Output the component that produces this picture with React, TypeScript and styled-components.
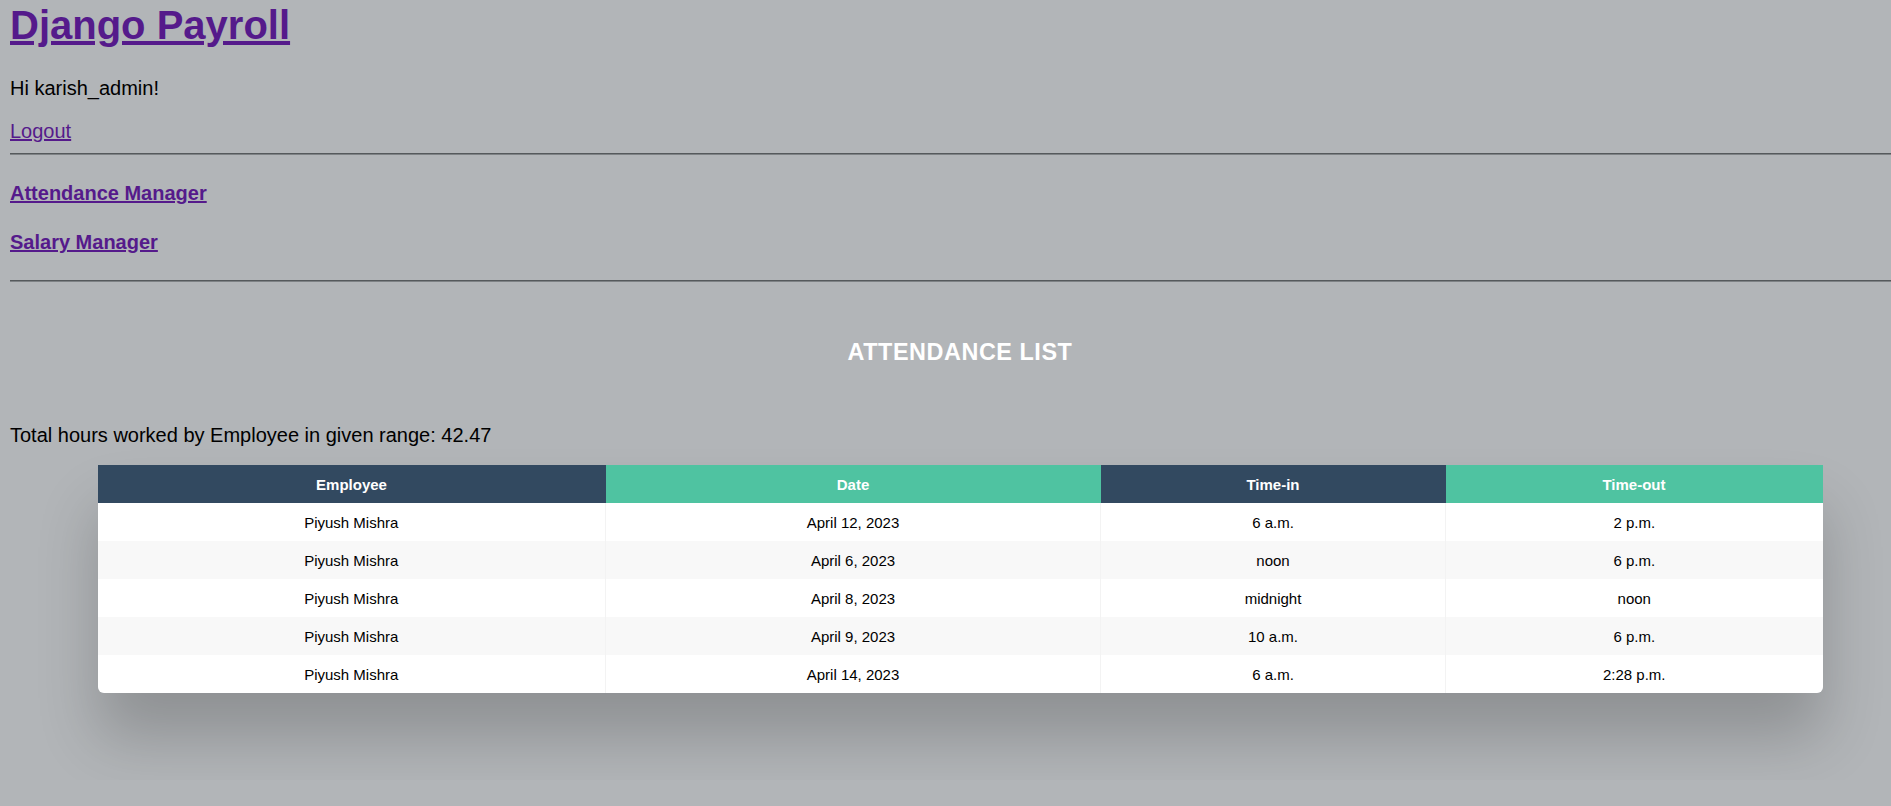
import styled, { createGlobalStyle } from "styled-components";

const GlobalStyle = createGlobalStyle`
  html, body {
    margin: 0;
    padding: 0;
    background: #b2b5b8;
    overflow: hidden;
  }
  body {
    font-family: "Liberation Sans", Arial, sans-serif;
    color: #000;
  }
`;

const Page = styled.div`
  box-sizing: border-box;
  width: 1920px;
  padding: 0 10px;
`;

const Title = styled.h1`
  margin: 2px 0 0;
  font-size: 40px;
  line-height: 46px;
  font-weight: 700;
`;

const Link = styled.a`
  color: #551a8b;
  text-decoration: underline;
  cursor: pointer;
`;

const Text = styled.p<{ $gap: number }>`
  margin: ${(p) => p.$gap}px 0 0;
  font-size: 20px;
  line-height: 23px;
`;

const Rule = styled.hr<{ $gap: number }>`
  margin: ${(p) => p.$gap}px 0 0;
  height: 0;
  border: none;
  border-top: 1px solid #55595c;
  border-bottom: 1px solid #7e8285;
`;

const NavHeading = styled.h4<{ $gap: number }>`
  margin: ${(p) => p.$gap}px 0 0;
  font-size: 20px;
  line-height: 23px;
  font-weight: 700;
`;

const SectionTitle = styled.h3`
  margin: 57px 0 0;
  text-align: center;
  color: #fff;
  font-size: 23.4px;
  line-height: 27px;
  font-weight: 700;
  letter-spacing: 0.55px;
  text-transform: uppercase;
`;

const TableWrapper = styled.div`
  margin: 18.5px 87.5px 87px;
  border-radius: 0 0 6px 6px;
  overflow: hidden;
  box-shadow: 0 44px 62px rgba(0, 0, 0, 0.2);
`;

const Table = styled.table`
  width: 100%;
  border-collapse: collapse;
  table-layout: fixed;
  background: #fff;
  font-size: 15px;
  white-space: nowrap;
`;

const HeadCell = styled.th<{ $alt: boolean; $w: number }>`
  box-sizing: border-box;
  width: ${(p) => p.$w}px;
  height: 38px;
  padding: 0 10px;
  text-align: center;
  color: #fff;
  font-weight: 700;
  background: ${(p) => (p.$alt ? "#4fc3a1" : "#324960")};
`;

const Row = styled.tr`
  &:nth-child(even) {
    background: #f8f8f8;
  }
`;

const Cell = styled.td`
  height: 38px;
  padding: 0 10px;
  text-align: center;
  border-right: 1px solid #f3f3f3;
  &:last-child {
    border-right: none;
  }
`;

const columns = [
  { label: "Employee", width: 508 },
  { label: "Date", width: 495 },
  { label: "Time-in", width: 345 },
  { label: "Time-out", width: 377 },
];

const rows = [
  ["Piyush Mishra", "April 12, 2023", "6 a.m.", "2 p.m."],
  ["Piyush Mishra", "April 6, 2023", "noon", "6 p.m."],
  ["Piyush Mishra", "April 8, 2023", "midnight", "noon"],
  ["Piyush Mishra", "April 9, 2023", "10 a.m.", "6 p.m."],
  ["Piyush Mishra", "April 14, 2023", "6 a.m.", "2:28 p.m."],
];

export default function App() {
  return (
    <>
      <GlobalStyle />
      <Page>
        <Title>
          <Link href="#">Django Payroll</Link>
        </Title>
        <Text $gap={28.5}>Hi karish_admin!</Text>
        <Text $gap={20}>
          <Link href="#">Logout</Link>
        </Text>
        <Rule $gap={10} />
        <NavHeading $gap={27.5}>
          <Link href="#">Attendance Manager</Link>
        </NavHeading>
        <NavHeading $gap={26}>
          <Link href="#">Salary Manager</Link>
        </NavHeading>
        <Rule $gap={25.5} />
        <SectionTitle>Attendance List</SectionTitle>
        <Text $gap={58}>Total hours worked by Employee in given range: 42.47</Text>
        <TableWrapper>
          <Table>
            <thead>
              <tr>
                {columns.map((c, i) => (
                  <HeadCell key={c.label} $alt={i % 2 === 1} $w={c.width}>
                    {c.label}
                  </HeadCell>
                ))}
              </tr>
            </thead>
            <tbody>
              {rows.map((r, i) => (
                <Row key={i}>
                  {r.map((v, j) => (
                    <Cell key={j}>{v}</Cell>
                  ))}
                </Row>
              ))}
            </tbody>
          </Table>
        </TableWrapper>
      </Page>
    </>
  );
}
